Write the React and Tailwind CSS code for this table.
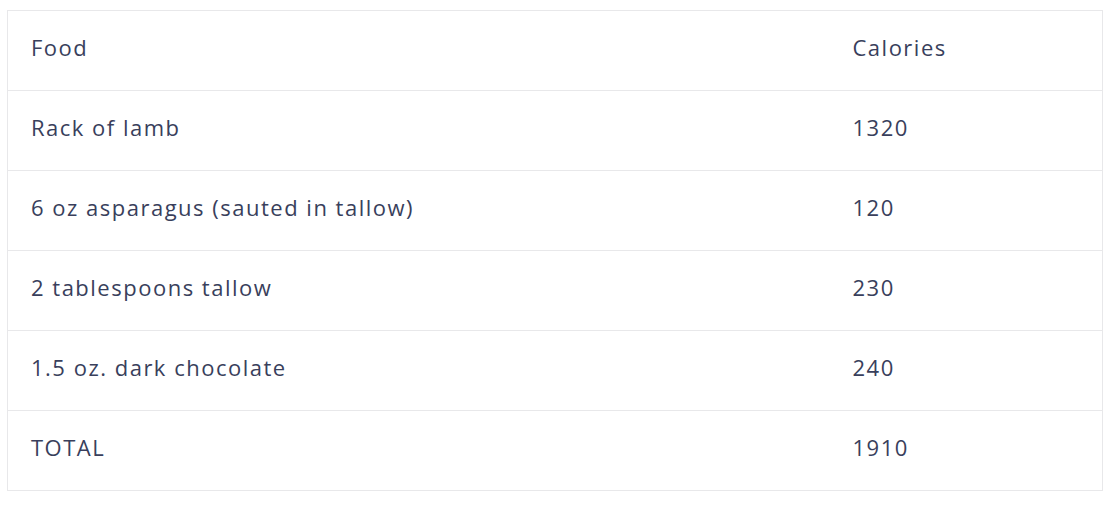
import React from "react";

const rows = [
  ["Rack of lamb", "1320"],
  ["6 oz asparagus (sauted in tallow)", "120"],
  ["2 tablespoons tallow", "230"],
  ["1.5 oz. dark chocolate", "240"],
  ["TOTAL", "1910"],
];

export default function App() {
  return (
    <div className="bg-white w-[1110px] h-[509px] pt-[10px] pl-[7px]" style={{ fontFamily: "'Open Sans', sans-serif" }}>
      <table className="w-[1096px] border-collapse border border-[#e8e8ea] text-[22px] tracking-[1.5px] text-[#393f5c]">
        <thead>
          <tr className="h-[80px] border-b border-[#e8e8ea]">
            <th className="pl-[23px] pb-[6px] text-left font-normal w-[822px]">Food</th>
            <th className="pl-[23px] pb-[6px] text-left font-normal">Calories</th>
          </tr>
        </thead>
        <tbody>
          {rows.map(([food, cal]) => (
            <tr key={food} className="h-[80px] border-b border-[#e8e8ea]">
              <td className="pl-[23px] pb-[6px]">{food}</td>
              <td className="pl-[23px] pb-[6px]">{cal}</td>
            </tr>
          ))}
        </tbody>
      </table>
    </div>
  );
}
